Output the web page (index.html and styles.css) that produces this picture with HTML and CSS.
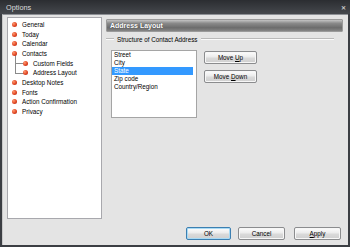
FILE: index.html
```html
<!DOCTYPE html>
<html lang="en">
<head>
    <meta charset="UTF-8">
    <title>Options</title>
    <link rel="stylesheet" href="styles.css">
</head>
<body>
    <div class="window">
        <div class="titlebar">
            <span class="title">Options</span>
            <span class="close">&#x2715;</span>
        </div>
        <div class="client">
            <div class="main">
                <div class="tree">
                    <div class="node"><span class="ball"></span>General</div>
                    <div class="node"><span class="ball"></span>Today</div>
                    <div class="node"><span class="ball"></span>Calendar</div>
                    <div class="node"><span class="ball"></span>Contacts</div>
                    <div class="node child"><span class="ball"></span>Custom Fields</div>
                    <div class="node child"><span class="ball"></span>Address Layout</div>
                    <div class="node"><span class="ball"></span>Desktop Notes</div>
                    <div class="node"><span class="ball"></span>Fonts</div>
                    <div class="node"><span class="ball"></span>Action Confirmation</div>
                    <div class="node"><span class="ball"></span>Privacy</div>
                </div>
                <div class="panel">
                    <div class="panel-head">Address Layout</div>
                    <div class="group-title">
                        <span class="rule short"></span>
                        <span class="group-text">Structure of Contact Address</span>
                        <span class="rule"></span>
                    </div>
                    <div class="group-body">
                        <div class="listbox">
                            <div class="item">Street</div>
                            <div class="item">City</div>
                            <div class="item selected">State</div>
                            <div class="item">Zip code</div>
                            <div class="item">Country/Region</div>
                        </div>
                        <div class="side-buttons">
                            <button class="btn side">Move <u>U</u>p</button>
                            <button class="btn side">Move <u>D</u>own</button>
                        </div>
                    </div>
                </div>
            </div>
            <div class="footer">
                <button class="btn foot default">OK</button>
                <button class="btn foot">Cancel</button>
                <button class="btn foot apply"><u>A</u>pply</button>
            </div>
        </div>
    </div>
</body>
</html>
```

FILE: styles.css
```css
body { margin: 0; font-family: "Liberation Sans", Arial, sans-serif; background: #3a3d42; }
.window { width: 350px; height: 247px; display: flex; flex-direction: column; background: #3b3e43; }
.titlebar { height: 14px; flex: none; display: flex; align-items: center; justify-content: space-between; padding: 0 4px 0 6px; background: linear-gradient(#2b2d31, #45484d); color: #dcdcdc; }
.title { font-size: 7.3px; }
.close { font-size: 6px; font-weight: bold; color: #c8c8c8; }
.client { flex: 1; margin: 0 2px 2px 2px; background: #e4e4e4; border-top: 1px solid #8d9095; border-left: 1px solid #c9c9c9; padding: 2px 5px 0 4px; display: flex; flex-direction: column; }
.main { display: flex; gap: 4px; }
.tree { width: 93px; height: 198px; background: #fff; border: 1px solid #a8a8ad; padding-top: 1.5px; font-size: 6.3px; }
.node { position: relative; height: 9.7px; display: flex; align-items: center; gap: 5px; padding-left: 4px; }
.node.child { padding-left: 15px; }
.node.child::before { content: ""; position: absolute; left: 6.5px; top: -5px; width: 8px; height: 9.8px; border-left: 1px solid #8a8a8a; border-bottom: 1px solid #8a8a8a; }
.ball { position: relative; z-index: 1; width: 5px; height: 5px; border-radius: 50%; background: radial-gradient(circle at 35% 35%, #ff9a70, #e04422 55%, #a8260f); }
.panel { flex: 1; padding-top: 2px; }
.panel-head { height: 11px; border: 1px solid #9a9a9a; border-radius: 1px; padding-left: 3px; display: flex; align-items: center; color: #fff; font-weight: bold; font-size: 7px; text-shadow: 0 0 1px #333; background: linear-gradient(#c4c4c4, #8a8a8a 30%, #6c6c6c 70%, #858585); }
.group-title { height: 10px; margin-top: 2px; display: flex; align-items: center; gap: 3px; font-size: 6.3px; }
.rule { flex: 1; height: 0; border-top: 1px solid #b9b9b9; border-bottom: 1px solid #fafafa; margin-right: 9px; }
.rule.short { flex: none; width: 8px; margin-right: 0; }
.group-body { display: flex; gap: 7px; margin-top: 6px; padding-left: 5px; }
.listbox { width: 84px; height: 66px; background: #fff; border: 1px solid #a5a5a5; font-size: 6.3px; }
.item { height: 7.9px; line-height: 7.9px; padding-left: 2px; margin-right: 3px; }
.item.selected { background: #3399ff; color: #fff; }
.side-buttons { display: flex; flex-direction: column; gap: 6px; padding-top: 1px; }
.btn { font-family: "Liberation Sans", Arial, sans-serif; font-size: 6.3px; color: #000; padding: 0; background: linear-gradient(#fdfdfd, #ececec 45%, #dadada 55%, #cfcfcf); border: 1px solid #8b8c8e; border-radius: 2px; box-shadow: inset 0 0 0 1px #f7f7f7; }
.btn.side { width: 53px; height: 13px; }
.footer { display: flex; justify-content: flex-end; margin-top: 8px; padding-right: 2px; }
.btn.foot { width: 47px; height: 13px; margin-left: 7px; }
.btn.default { width: 45px; border-color: #3c7fb1; box-shadow: inset 0 0 0 1px #a8daf5; }
.btn.apply { margin-left: 9px; }
```
